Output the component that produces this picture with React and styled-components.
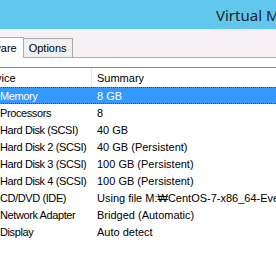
import React from "react";
import styled, { createGlobalStyle } from "styled-components";

const Global = createGlobalStyle`
  html, body {
    margin: 0;
    padding: 0;
    background: #ffffff;
    overflow: hidden;
  }
  #root {
    width: 276px;
    height: 260px;
    overflow: hidden;
  }
`;

const Window = styled.div`
  width: 420px;
  margin-left: -40px;
  font-family: "Liberation Sans", Tahoma, sans-serif;
  font-size: 11px;
  color: #000;
`;

const TitleBar = styled.div`
  height: 29px;
  background: #61c7ec;
  display: flex;
  align-items: center;
  padding-left: 256px;
  font-family: "Noto Sans", sans-serif;
  font-size: 15px;
  color: #1e1e1e;
  white-space: nowrap;
`;

const TabStrip = styled.div`
  background: #f5f1f5;
  height: 29px;
  display: flex;
  align-items: flex-end;
  padding-left: 2px;
  border-bottom: 1px solid #acacac;
  box-sizing: border-box;
`;

const Tab = styled.div`
  height: ${(p) => (p.$active ? 21 : 19)}px;
  padding: 0 ${(p) => (p.$active ? 6 : 5)}px;
  display: flex;
  align-items: center;
  box-sizing: border-box;
  border: 1px solid #acacac;
  border-bottom: none;
  background: ${(p) => (p.$active ? "#ffffff" : "#f0f0f0")};
  margin-bottom: ${(p) => (p.$active ? -1 : 0)}px;
  margin-left: ${(p) => (p.$active ? 0 : -1)}px;
  position: relative;
`;

const Panel = styled.div`
  background: #fff;
  padding-top: 9px;
`;

const List = styled.div`
  border-top: 1px solid #828790;
`;

const Header = styled.div`
  display: grid;
  grid-template-columns: 132px 1fr;
  height: 19px;
  align-items: center;
`;

const HeaderCell = styled.div`
  padding-left: ${(p) => (p.$sep ? 22 : 5)}px;
  height: 19px;
  display: flex;
  align-items: center;
  border-right: ${(p) => (p.$sep ? "1px solid #e5e5e5" : "none")};
  box-sizing: border-box;
`;

const Row = styled.div`
  display: grid;
  grid-template-columns: 132px 1fr;
  height: 17px;
  align-items: center;
  box-sizing: border-box;
  background: ${(p) => (p.$selected ? "#3399ff" : "transparent")};
  color: ${(p) => (p.$selected ? "#fff" : "#000")};
  border-top: 1px dotted ${(p) => (p.$selected ? "#1f4f86" : "transparent")};
  border-bottom: 1px dotted ${(p) => (p.$selected ? "#1f4f86" : "transparent")};
`;

const Cell = styled.div`
  padding-left: ${(p) => (p.$first ? 40 : 5)}px;
  letter-spacing: ${(p) => (p.$first ? "-0.4px" : "0")};
  white-space: nowrap;
  overflow: hidden;
`;

const rows = [
  ["Memory", "8 GB"],
  ["Processors", "8"],
  ["Hard Disk (SCSI)", "40 GB"],
  ["Hard Disk 2 (SCSI)", "40 GB (Persistent)"],
  ["Hard Disk 3 (SCSI)", "100 GB (Persistent)"],
  ["Hard Disk 4 (SCSI)", "100 GB (Persistent)"],
  ["CD/DVD (IDE)", "Using file M:\u20a9CentOS-7-x86_64-Everything.iso"],
  ["Network Adapter", "Bridged (Automatic)"],
  ["Display", "Auto detect"],
];

export default function App() {
  return (
    <>
      <Global />
      <Window>
        <TitleBar>Virtual Machine Settings</TitleBar>
        <TabStrip>
          <Tab $active>Hardware</Tab>
          <Tab>Options</Tab>
        </TabStrip>
        <Panel>
          <List>
            <Header>
              <HeaderCell $sep>Device</HeaderCell>
              <HeaderCell>Summary</HeaderCell>
            </Header>
            {rows.map(([device, summary], i) => (
              <Row key={device} $selected={i === 0}>
                <Cell $first>{device}</Cell>
                <Cell>{summary}</Cell>
              </Row>
            ))}
          </List>
        </Panel>
      </Window>
    </>
  );
}
